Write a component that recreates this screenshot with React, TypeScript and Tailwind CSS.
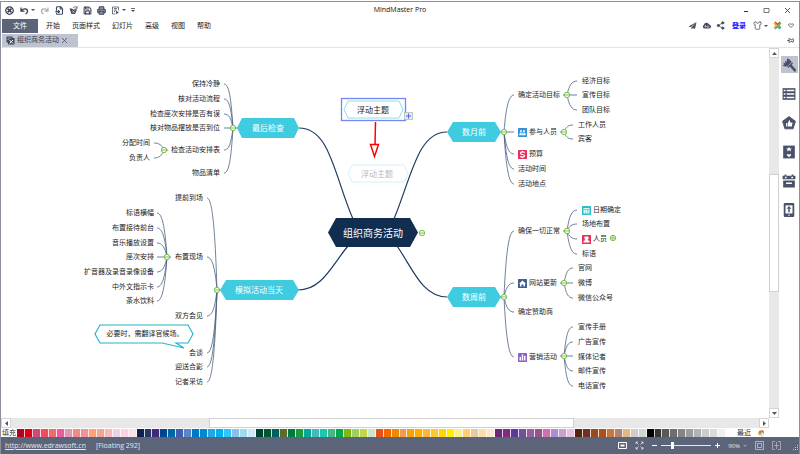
import React, { useState } from "react";
import { FileInput, Pin, Printer, Save, Share2, Shirt } from "lucide-react";

type Side = "left" | "right";
type IconKind = "people" | "money" | "date" | "person" | "home" | "chart";

type Topic = {
  label: string;
  x: number;
  y: number;
  side: Side;
  icon?: IconKind;
};

type Branch = {
  hub: [number, number];
  stem: number;
  end: number;
  side: Side;
  x: number;
  items: { label: string; y: number; icon?: IconKind }[];
};

const MENUS = ["开始", "页面样式", "幻灯片", "高级", "视图", "帮助"];

const BRANCHES: Branch[] = [
  {
    hub: [233, 128], stem: 238, end: 224, side: "left", x: 220,
    items: [
      { label: "保持冷静", y: 84 },
      { label: "核对活动流程", y: 99 },
      { label: "检查座次安排是否有误", y: 114 },
      { label: "核对物品摆放是否到位", y: 128 },
      { label: "检查活动安排表", y: 150 },
      { label: "物品清单", y: 173 },
    ],
  },
  {
    hub: [164, 150], stem: 168, end: 154, side: "left", x: 150,
    items: [
      { label: "分配时间", y: 143 },
      { label: "负责人", y: 158 },
    ],
  },
  {
    hub: [217, 290], stem: 222, end: 207, side: "left", x: 203,
    items: [
      { label: "提前到场", y: 198 },
      { label: "布置现场", y: 257 },
      { label: "双方会见", y: 316 },
      { label: "会谈", y: 353 },
      { label: "迎送合影", y: 367 },
      { label: "记者采访", y: 382 },
    ],
  },
  {
    hub: [167, 257], stem: 171, end: 157, side: "left", x: 154,
    items: [
      { label: "标语横幅", y: 213 },
      { label: "布置接待前台", y: 228 },
      { label: "音乐播放设置", y: 243 },
      { label: "座次安排", y: 257 },
      { label: "扩音器及录音录像设备", y: 272 },
      { label: "中外文指示卡", y: 287 },
      { label: "茶水饮料", y: 301 },
    ],
  },
  {
    hub: [504, 132], stem: 500, end: 514, side: "right", x: 518,
    items: [
      { label: "确定活动目标", y: 95 },
      { label: "参与人员", y: 132, icon: "people" },
      { label: "预算", y: 154, icon: "money" },
      { label: "活动时间", y: 169 },
      { label: "活动地点", y: 184 },
    ],
  },
  {
    hub: [567, 95], stem: 563, end: 577, side: "right", x: 582,
    items: [
      { label: "经济目标", y: 81 },
      { label: "宣传目标", y: 95 },
      { label: "团队目标", y: 110 },
    ],
  },
  {
    hub: [564, 132], stem: 560, end: 573, side: "right", x: 578,
    items: [
      { label: "工作人员", y: 125 },
      { label: "宾客", y: 139 },
    ],
  },
  {
    hub: [504, 297], stem: 500, end: 514, side: "right", x: 518,
    items: [
      { label: "确保一切正常", y: 231 },
      { label: "网站更新", y: 283, icon: "home" },
      { label: "确定赞助商", y: 312 },
      { label: "营销活动", y: 357, icon: "chart" },
    ],
  },
  {
    hub: [567, 231], stem: 563, end: 577, side: "right", x: 582,
    items: [
      { label: "日期确定", y: 210, icon: "date" },
      { label: "场地布置", y: 224 },
      { label: "人员", y: 239, icon: "person" },
      { label: "标语", y: 254 },
    ],
  },
  {
    hub: [564, 283], stem: 560, end: 573, side: "right", x: 578,
    items: [
      { label: "官网", y: 268 },
      { label: "微博", y: 283 },
      { label: "微信公众号", y: 298 },
    ],
  },
  {
    hub: [564, 356], stem: 560, end: 573, side: "right", x: 578,
    items: [
      { label: "宣传手册", y: 327 },
      { label: "广告宣传", y: 342 },
      { label: "媒体记者", y: 357 },
      { label: "邮件宣传", y: 371 },
      { label: "电话宣传", y: 386 },
    ],
  },
];

const SWATCHES = [
  // reds and pinks
  "#b8001a", "#e00016", "#cb4c78", "#ee4c60", "#f0696e", "#ea5c9c", "#e395b6", "#f28a88", "#f2919a", "#ffa07a", "#f0a78f", "#f6b9b9", "#ead3ea", "#fdd3e4", "#fde0e6",
  // blues
  "#0f1f4f", "#23376b", "#3f2a75", "#00468b", "#0066a8", "#3f5fae", "#5a86c8", "#0078c8", "#0088d0", "#27a7e0", "#00b0f0", "#2ec6fb", "#8bc0e8", "#9fdaf0", "#cdeaf5",
  // greens
  "#004030", "#005a2b", "#006060", "#5a6b2b", "#007a3f", "#1f9a3f", "#00ab9c", "#48b8b8", "#18c8b0", "#48b880", "#00a850", "#80b810", "#a0d060", "#c0d848", "#cde6c8",
  // oranges and yellows
  "#e8501e", "#f06a00", "#f08a00", "#f29a50", "#f5a400", "#ffae00", "#ffb830", "#ffc830", "#ffd800", "#fff000", "#fff080", "#ffd070", "#e8cc98", "#ffdcaa", "#ffe6cc",
  // purples
  "#6a2878", "#842a80", "#5e3a98", "#74509c", "#9560a0", "#9c5088", "#d070b0", "#a890d0", "#c4a4cc", "#ecc0dc",
  // browns
  "#54240f", "#733020", "#964a20", "#b05018", "#c47a3c", "#b4826a", "#e0b880", "#d4cccc", "#ccd8cc",
  // greys
  "#000000", "#3a3535", "#585858", "#6e6e6e", "#858585", "#9c9c9c", "#b0b4b4", "#c8cccc", "#dadada", "#f0f0f0",
];

function curve([hx, hy]: [number, number], end: number, y: number) {
  if (Math.abs(y - hy) < 2) return `M${hx} ${hy}H${end}`;
  const dir = end > hx ? 1 : -1;
  return `M${hx} ${hy}C${hx + 2 * dir} ${hy + (y - hy) * 0.7} ${end - 5 * dir} ${y} ${end} ${y}`;
}

function Caret() {
  return (
    <svg className="h-1 w-1" viewBox="0 0 4 4">
      <path d="M0 1h4L2 3z" fill="#444b5e" />
    </svg>
  );
}

function TopicIcon({ kind }: { kind: IconKind }) {
  return (
    <svg className="h-[9px] w-[9px] shrink-0" viewBox="0 0 18 18">
      {kind === "people" && (
        <>
          <rect width="18" height="18" rx="1" fill="#2f94dc" />
          <circle cx="6" cy="6" r="2" fill="#fff" />
          <circle cx="12" cy="6" r="2" fill="#fff" />
          <path d="M3 14v-3l2-2h2v5zM8.500 14V9H10v5zM11 14V9h2l2 2v3z" fill="#fff" />
          <path d="M3 12.500h12v2H3z" fill="#fff" />
        </>
      )}
      {kind === "money" && (
        <>
          <rect width="18" height="18" rx="1" fill="#e8305a" />
          <path d="M13 5.500c-1-2.500-8-2.500-8 .8C5 10 13 8 13 11.700c0 3.300-7 3.300-8 .3" fill="none" stroke="#fff" strokeWidth="2.500" />
          <path d="M9 1.500v2.500M9 14v2.500" stroke="#fff" strokeWidth="1.500" />
        </>
      )}
      {kind === "date" && (
        <>
          <rect width="18" height="18" rx="1" fill="#2cbccb" />
          <path d="M3 4h12v11H3z" fill="#e8fbfd" />
          <path d="M3 7h12M6 9.500h2M10 9.500h3M6 12.500h2M10 12.500h3M6 2v3M12 2v3" stroke="#2cbccb" strokeWidth="1.300" />
        </>
      )}
      {kind === "person" && (
        <>
          <rect width="18" height="18" rx="1" fill="#e8305a" />
          <path d="M5 3h8v5l-2 2 4 2v3H3v-3l4-2-2-2z" fill="#fff" />
        </>
      )}
      {kind === "home" && (
        <>
          <rect width="18" height="18" rx="1" fill="#3e5f92" />
          <path d="M2 9.500 9 3l7 6.500h-2V15h-3v-4H7v4H4V9.500z" fill="#fff" />
        </>
      )}
      {kind === "chart" && (
        <>
          <rect width="18" height="18" rx="1" fill="#8a62c8" />
          <path d="M3 15V8h3v7zM7.500 15V3h3v12zM12 15V6h3v9z" fill="#fff" />
        </>
      )}
    </svg>
  );
}

function TopicLabel({ label, x, y, side, icon }: Topic) {
  return (
    <div
      className={`absolute flex h-[10px] items-center gap-[2px] whitespace-nowrap text-[7px] leading-[10px] text-[#1c1c1c] ${side === "left" ? "-translate-x-full" : ""}`}
      style={{ left: x, top: y - 5 }}
    >
      {icon && <TopicIcon kind={icon} />}
      {label}
    </div>
  );
}

function Toggle({ x, y, plus }: { x: number; y: number; plus?: boolean }) {
  return (
    <g stroke="#7cc04a" fill="#f4fbee">
      <circle cx={x} cy={y} r="2.700" />
      <path d={`M${x - 2} ${y}h4${plus ? `M${x} ${y - 2}v4` : ""}`} strokeWidth="0.900" />
    </g>
  );
}

function Hexagon({ x, y, w, h, inset, fill, stroke = "none" }: { x: number; y: number; w: number; h: number; inset: number; fill: string; stroke?: string }) {
  const mid = y + h / 2;
  return (
    <path
      d={`M${x} ${mid}L${x + inset} ${y}H${x + w - inset}L${x + w} ${mid}L${x + w - inset} ${y + h}H${x + inset}Z`}
      fill={fill}
      stroke={stroke}
    />
  );
}

function NodeText({ x, y, className, children }: { x: number; y: number; className: string; children: React.ReactNode }) {
  return (
    <div className={`absolute -translate-x-1/2 -translate-y-1/2 whitespace-nowrap ${className}`} style={{ left: x, top: y }}>
      {children}
    </div>
  );
}

function MindMap() {
  return (
    <main className="relative min-h-0 min-w-0 overflow-hidden bg-white">
      {/* scrolled surface: topics live in drawing coordinates */}
      <div className="absolute -left-px -top-12 h-[420px] w-[770px]">
        <svg className="absolute inset-0 h-full w-full" viewBox="0 0 770 420" fill="none">
          <g stroke="#1f3a5f" strokeWidth="1.200">
            <path d="M299 128C330 128 334 175 353 219" />
            <path d="M447 132C418 132 412 175 394 219" />
            <path d="M298 290C322 290 332 265 348 246" />
            <path d="M397 246C412 267 422 297 447 297" />
          </g>
          <g stroke="#4a6282" strokeWidth="0.800">
            {BRANCHES.map((b) => (
              <g key={b.hub.join()}>
                <path d={`M${b.stem} ${b.hub[1]}H${b.hub[0]}`} />
                {b.items.map((t) => (
                  <path key={t.label} d={curve(b.hub, b.end, t.y)} />
                ))}
              </g>
            ))}
          </g>

          <Hexagon x={237} y={118} w={62} h={20} inset={5} fill="#3fcbe0" />
          <Hexagon x={220} y={280} w={79} h={20} inset={6} fill="#3fcbe0" />
          <Hexagon x={447} y={122} w={54} h={20} inset={6} fill="#3fcbe0" />
          <Hexagon x={447} y={287} w={54} h={20} inset={6} fill="#3fcbe0" />
          <Hexagon x={328} y={218} w={90} h={29} inset={8} fill="#112d50" />

          {BRANCHES.map((b) => (
            <Toggle key={b.hub.join()} x={b.hub[0]} y={b.hub[1]} />
          ))}
          <Toggle x={422} y={233} />
          <Toggle x={613} y={238} plus />

          {/* dragged floating topic and its drop preview */}
          <rect x="341.500" y="98.500" width="64" height="22" fill="#fff" stroke="#7487ee" strokeWidth="1.300" />
          <Hexagon x={344} y={101} w={59} h={17} inset={4} fill="#fff" stroke="#8fdeea" />
          <Hexagon x={348} y={165} w={60} h={17} inset={4} fill="none" stroke="#d2f3f7" />
          <rect x="404.500" y="112.500" width="8" height="7" fill="#e2eaf0" stroke="#a9bba9" strokeWidth="0.700" />
          <path d="M406 116h5M408.500 113.500v5" stroke="#5468e8" />
          <path d="M375.500 122 375 145" stroke="#f00" strokeWidth="1.500" />
          <path d="M370.500 144.500h8l-4 12z" fill="#fff" stroke="#f00" strokeWidth="1.500" />

          <path d="M100 325h88l5 9-5 9h-12l8 5-22-5H100l-5-9z" fill="#fff" stroke="#27b6c8" strokeWidth="1.200" />
        </svg>

        {BRANCHES.map((b) =>
          b.items.map((t) => <TopicLabel key={`${b.hub}${t.label}`} {...t} x={b.x} side={b.side} />)
        )}

        <NodeText x={268} y={128} className="text-[8px] leading-3 text-white">最后检查</NodeText>
        <NodeText x={259} y={290} className="text-[8px] leading-3 text-white">模拟活动当天</NodeText>
        <NodeText x={474} y={132} className="text-[8px] leading-3 text-white">数月前</NodeText>
        <NodeText x={474} y={297} className="text-[8px] leading-3 text-white">数周前</NodeText>
        <NodeText x={373} y={233} className="text-[10px] leading-4 text-white">组织商务活动</NodeText>
        <NodeText x={373} y={110} className="text-[8px] leading-3 text-[#222]">浮动主题</NodeText>
        <NodeText x={377} y={174} className="text-[8px] leading-3 text-[#b9b9b9]">浮动主题</NodeText>
        <NodeText x={145} y={334} className="text-[7px] leading-[10px] text-[#1c1c1c]">必要时，需翻译官候场。</NodeText>
      </div>
    </main>
  );
}

function TitleBar() {
  return (
    <header className="grid h-4 grid-cols-3 items-center px-1 text-[#444b5e]">
      <div className="flex items-center gap-[5px]">
        <svg className="h-[9px] w-[9px]" viewBox="0 0 18 18">
          <circle cx="9" cy="9" r="7.500" fill="#fff" stroke="#343a4c" strokeWidth="2.500" />
          <path d="m5 5 8 8M13 5l-8 8" stroke="#343a4c" strokeWidth="3.500" />
        </svg>
        <button aria-label="Undo" className="flex items-center gap-[2px] pl-px">
          <svg className="h-[9px] w-[9px]" viewBox="0 0 18 18">
            <path d="M2 3v7h7M3 9c3-4 12-5 12 2 0 3-2 4-4 5" fill="none" stroke="#343a4c" strokeWidth="2.500" />
          </svg>
          <Caret />
        </button>
        <button aria-label="Redo">
          <svg className="h-[9px] w-[9px]" viewBox="0 0 18 18">
            <path d="M16 3v7H9M15 9C12 5 3 4 3 11c0 3 2 4 4 5" fill="none" stroke="#a9adb8" strokeWidth="2.500" />
          </svg>
        </button>
        <button aria-label="Import" className="pl-[1px]"><FileInput className="h-[9px] w-[9px]" strokeWidth={3} /></button>
        <button aria-label="Open">
          <svg className="h-[9px] w-[9px]" viewBox="0 0 18 18">
            <path d="M1 5h5l2 2h8l-4 9H5z" fill="#444b5e" />
            <path d="M8 4c2-3 5-3 7-1l1-2v5h-5" fill="none" stroke="#444b5e" strokeWidth="1.500" />
            <path d="m6 9 5 4M11 9l-4 5" stroke="#fff" />
          </svg>
        </button>
        <button aria-label="Save"><Save className="h-[9px] w-[9px]" strokeWidth={3} /></button>
        <button aria-label="Print"><Printer className="h-[9px] w-[9px] fill-[#8b90a0]" strokeWidth={3} /></button>
        <button aria-label="Options" className="flex items-center gap-[2px]">
          <svg className="h-[9px] w-[9px]" viewBox="0 0 18 18">
            <path d="M15 9V2H3v14h6M6 5h6M6 8h5M6 11h2" fill="none" stroke="#444b5e" strokeWidth="1.500" />
            <path d="m9 8 7 6-3 .5L11 17z" fill="#444b5e" />
          </svg>
          <Caret />
        </button>
        <button aria-label="Customize toolbar">
          <svg className="h-[5px] w-1" viewBox="0 0 4 5">
            <path d="M0 .5h4" stroke="#444b5e" strokeWidth="0.800" />
            <path d="M0 2h4L2 4z" fill="#444b5e" />
          </svg>
        </button>
      </div>
      <h1 className="text-center text-[7px] leading-[10px] text-[#111]">MindMaster Pro</h1>
      <div className="flex items-center justify-end gap-[14px] pr-[4px]">
        <button aria-label="Minimize">
          <svg className="h-[7px] w-[7px]" viewBox="0 0 7 7"><path d="M2 4.500h4" stroke="#333" /></svg>
        </button>
        <button aria-label="Maximize">
          <svg className="h-[7px] w-[7px]" viewBox="0 0 7 7"><path d="M1 1.500h5v4H1z" fill="none" stroke="#555" strokeWidth="0.800" /></svg>
        </button>
        <button aria-label="Close">
          <svg className="h-[7px] w-[7px]" viewBox="0 0 7 7"><path d="m1 1 5 5M6 1 1 6" stroke="#333" strokeWidth="0.800" /></svg>
        </button>
      </div>
    </header>
  );
}

function MenuBar() {
  return (
    <nav className="flex h-[15px] items-center justify-between px-px text-[7px] leading-[10px] text-[#222]">
      <div className="flex items-center gap-3">
        <button className="mr-[-4px] h-[14px] w-9 bg-[#5c6479] text-white">文件</button>
        {MENUS.map((m) => (
          <button key={m}>{m}</button>
        ))}
      </div>
      <div className="flex items-center gap-[5px] pr-[4px] text-[#444b5e]">
        <button aria-label="Send">
          <svg className="h-[9px] w-[9px]" viewBox="0 0 18 18">
            <path d="M17 2 1 11l5 1zM17 2 7 13v4l3-3 4 2z" fill="#444b5e" />
          </svg>
        </button>
        <button aria-label="Cloud">
          <svg className="h-[9px] w-[9px]" viewBox="0 0 18 18">
            <path d="M4 15a4 4 0 0 1-.5-7A5.500 5.500 0 0 1 14 7a4 4 0 0 1 0 8z" fill="#444b5e" />
            <path d="M7 9v4M5 11l2-2 2 2M12 13V9M10 11l2 2 2-2" fill="none" stroke="#fff" strokeWidth="1.200" />
          </svg>
        </button>
        <button aria-label="Share"><Share2 className="h-[9px] w-[9px] fill-[#444b5e]" strokeWidth={2} /></button>
        <a href="#login" className="px-[2px] font-bold text-[#1a1aff]">登录</a>
        <button aria-label="Theme" className="flex items-center gap-[2px]">
          <Shirt className="h-[9px] w-[9px]" strokeWidth={2} />
          <Caret />
        </button>
        <button aria-label="Apps">
          <svg className="h-[9px] w-[9px]" viewBox="0 0 18 18" fill="none" strokeWidth="3">
            <path d="m4 2 5 5 5-5" stroke="#e83828" />
            <path d="m4 16 5-5 5 5" stroke="#28a0e0" />
            <path d="m2 4 5 5-5 5" stroke="#f5a400" />
            <path d="m16 4-5 5 5 5" stroke="#58b830" />
          </svg>
        </button>
        <button aria-label="Collapse ribbon" className="pl-px">
          <svg className="h-[5px] w-[6px]" viewBox="0 0 12 10">
            <path d="M1 4c0-3 3-3 5-1 2-2 5-2 5 1L6 9z" fill="none" stroke="#444b5e" strokeWidth="1.500" />
          </svg>
        </button>
      </div>
    </nav>
  );
}

function TabStrip() {
  return (
    <div className="flex h-[15px] items-center justify-between border-b border-[#e4e4e4] px-px">
      <div className="flex h-[13px] w-[76px] items-center gap-[2px] bg-[#bfc3d0] px-1 text-[7px] leading-[10px] text-[#333a4c]">
        <svg className="h-[9px] w-[9px] shrink-0" viewBox="0 0 18 18">
          <path d="M1 1h12v3h4v13H4v-4H1z" fill="#3c4459" />
          <path d="M3 4h8M3 7h3" stroke="#fff" />
          <path d="m7 8 7 7M14 8l-7 7" stroke="#fff" strokeWidth="2" />
        </svg>
        <span className="whitespace-nowrap">组织商务活动</span>
        <button aria-label="Close tab" className="ml-px">
          <svg className="h-[5px] w-[5px]" viewBox="0 0 5 5"><path d="m0 0 5 5M5 0 0 5" stroke="#444b5e" strokeWidth="0.800" /></svg>
        </button>
      </div>
      <button aria-label="Pin panel" className="pr-[4px]">
        <Pin className="h-[7px] w-[7px] rotate-90 text-[#444b5e]" strokeWidth={3} />
      </button>
    </div>
  );
}

function ScrollArrow({ d, label }: { d: string; label: string }) {
  return (
    <button aria-label={label} className="flex h-[10px] w-[10px] shrink-0 items-center justify-center border border-[#d4d4d4] bg-white">
      <svg className="h-[5px] w-[5px]" viewBox="0 0 5 5"><path d={d} fill="#555" /></svg>
    </button>
  );
}

const TOOLS = [
  {
    label: "Style",
    art: (
      <>
        <path d="M9 1c3 0 5 2 6 4l4 4-8 8-3-3c-3 1-6 0-7-2l3-1-2-3 4 1-1-4 3 1z" fill="#4a5269" />
        <path d="m15 13 7 8" stroke="#4a5269" strokeWidth="4.500" strokeLinecap="round" />
        <path d="m17 7-8 8" stroke="#bfc3d0" strokeWidth="1.200" />
      </>
    ),
  },
  {
    label: "Outline",
    art: (
      <>
        <path d="M1 2h22v20H1z" fill="#4a5269" />
        <path d="M3 6h3M8 6h13M3 12h3M8 12h13M3 18h3M8 18h13" stroke="#fff" strokeWidth="2.500" />
      </>
    ),
  },
  {
    label: "Clipart",
    art: (
      <>
        <path d="M12 1 23 9l-4 13H5L1 9z" fill="#4a5269" stroke="#4a5269" strokeWidth="1.500" strokeLinejoin="round" />
        <path d="M7 18v-6h2v6zM10 12l3-6 1 5h4l-1 7h-7z" fill="#fff" />
      </>
    ),
  },
  {
    label: "Marks",
    art: (
      <>
        <path d="M2 1h20v22H2z" fill="#4a5269" />
        <path d="m12 3 1.500 3H17l-2.500 2 1 3-3.500-2-3.500 2 1-3L7 6h3.500z" fill="#fff" />
        <path d="m12 21-4-4 2-2 2 1.500 2-1.500 2 2z" fill="#fff" />
      </>
    ),
  },
  {
    label: "Tasks",
    art: (
      <>
        <path d="M1 3h22v6H1zM2 11h20v12H2z" fill="#4a5269" />
        <path d="M6 1v5M18 1v5" stroke="#4a5269" strokeWidth="3" />
        <path d="M5 6h3M16 6h3M7 16h10" stroke="#fff" strokeWidth="2.500" />
      </>
    ),
  },
  {
    label: "Device",
    art: (
      <>
        <rect x="3" y="0" width="18" height="24" rx="2" fill="#4a5269" />
        <path d="M6 4h12v14H6z" fill="#fff" />
        <path d="M12 16V9" stroke="#4a5269" strokeWidth="2.500" />
        <path d="m8 10 4-5 4 5z" fill="#4a5269" />
        <circle cx="12" cy="21" r="1.200" fill="#fff" />
      </>
    ),
  },
];

function SideTools() {
  const [active, setActive] = useState("Style");
  return (
    <aside className="flex w-5 flex-col items-center gap-[12px] bg-white pt-2">
      {TOOLS.map((t) => (
        <button
          key={t.label}
          aria-label={t.label}
          onClick={() => setActive(t.label)}
          className={`flex h-[17px] w-[17px] items-center justify-center ${active === t.label ? "bg-[#bfc3d0]" : ""}`}
        >
          <svg className="h-[14px] w-[14px]" viewBox="0 0 24 24" fill="none">{t.art}</svg>
        </button>
      ))}
    </aside>
  );
}

function ColorBar() {
  return (
    <div className="flex h-[9px] items-center bg-white text-[7px] leading-[9px] text-[#333]">
      <span className="w-4 shrink-0 pl-px">填充</span>
      <div className="flex h-2 min-w-0 flex-1">
        {SWATCHES.map((c, i) => (
          <button key={i} aria-label={c} className="h-full min-w-0 flex-1 border-r border-white/80" style={{ backgroundColor: c }} />
        ))}
      </div>
      <div className="flex w-[73px] shrink-0 items-center gap-[6px] pl-[11px]">
        <span>最近</span>
        <button aria-label="More colors">
          <svg className="h-2 w-2" viewBox="0 0 16 16">
            <path d="M2 9c0-5 5-8 9-7 4 2 4 8 1 9-2 0-3-1-4 1s-6 1-6-3z" fill="#e9a94a" />
            <circle cx="6" cy="6" r="1.800" fill="#3a80d8" />
            <circle cx="11" cy="5" r="1.800" fill="#e04838" />
            <path d="M9 7v8h3V7z" fill="#fff" stroke="#888" strokeWidth="0.500" />
          </svg>
        </button>
      </div>
    </div>
  );
}

function StatusBar() {
  const [zoom, setZoom] = useState(90);
  return (
    <footer className="flex h-[17px] items-center justify-between bg-[#5c6479] pl-1 text-[7px] leading-[10px] text-[#e6e8ee]">
      <div className="flex items-center gap-[10px]">
        <a href="#edrawsoft" className="underline">http://www.edrawsoft.cn</a>
        <span>[Floating 292]</span>
      </div>
      <div className="flex items-center gap-2">
        <button aria-label="Fit page">
          <svg className="h-[9px] w-[9px]" viewBox="0 0 9 9"><path d="M.5 1.500h8v6h-8z" fill="none" stroke="#fff" /><path d="M2.500 3.500h4v2h-4z" fill="#fff" /></svg>
        </button>
        <button aria-label="Full screen">
          <svg className="h-[9px] w-[9px]" viewBox="0 0 18 18" fill="none" stroke="#e6e8ee" strokeWidth="1.500">
            <path d="M2 6V2h4M12 2h4v4M16 12v4h-4M6 16H2v-4M2 2l5 5M16 2l-5 5M16 16l-5-5M2 16l5-5" />
          </svg>
        </button>
        <div className="flex items-center gap-[4px]">
          <button aria-label="Zoom out"><svg className="h-[5px] w-[5px]" viewBox="0 0 5 5"><path d="M0 2.500h5" stroke="#fff" /></svg></button>
          <input
            type="range"
            aria-label="Zoom"
            min={10}
            max={400}
            value={zoom}
            onChange={(e) => setZoom(Number(e.target.value))}
            className="h-2 w-[50px] appearance-none bg-transparent [&::-webkit-slider-runnable-track]:h-px [&::-webkit-slider-runnable-track]:bg-[#e6e8ee] [&::-webkit-slider-thumb]:-mt-[3px] [&::-webkit-slider-thumb]:h-[7px] [&::-webkit-slider-thumb]:w-[3px] [&::-webkit-slider-thumb]:appearance-none [&::-webkit-slider-thumb]:bg-white"
          />
          <button aria-label="Zoom in"><svg className="h-[5px] w-[5px]" viewBox="0 0 5 5"><path d="M0 2.500h5M2.500 0v5" stroke="#fff" /></svg></button>
        </div>
        <button className="flex items-center gap-[3px] text-[6px]">
          {zoom}%
          <svg className="h-1 w-1" viewBox="0 0 4 4"><path d="M0 1h4L2 3z" fill="#8f96a8" /></svg>
        </button>
        <button aria-label="Fit selection">
          <svg className="h-[9px] w-[9px]" viewBox="0 0 9 9" fill="none" stroke="#c3c7d2"><path d="M.5.5h8v8h-8z" strokeWidth="0.800" /><path d="M2.500 2.500h4v4h-4z" strokeWidth="0.800" /></svg>
        </button>
        <button aria-label="Split view">
          <svg className="h-[9px] w-[9px]" viewBox="0 0 9 9" fill="none" stroke="#aeb3c2" strokeWidth="0.800"><path d="M3 .5H.5v8H3M6 .5h2.500v8H6M2 4.500h5M4.500 1v7" /></svg>
        </button>
        <svg className="ml-[3px] h-[7px] w-[7px] self-end" viewBox="0 0 7 7" fill="#c3c7d2">
          <path d="M5 1h1v1H5zM3 3h1v1H3zM5 3h1v1H5zM1 5h1v1H1zM3 5h1v1H3zM5 5h1v1H5z" />
        </svg>
      </div>
    </footer>
  );
}

export default function App() {
  return (
    <div className="h-screen bg-white pt-px font-['Open_Sans','Noto_Sans_CJK_SC',sans-serif]">
      <div className="flex h-full flex-col border-x border-t border-[#8b8f9b]">
        <TitleBar />
        <MenuBar />
        <TabStrip />
        <div className="flex min-h-0 flex-1">
          <div className="grid min-w-0 flex-1 grid-cols-[minmax(0,1fr)_10px] grid-rows-[minmax(0,1fr)_10px]">
            <MindMap />
            <div className="flex min-h-0 flex-col bg-[#e8e8e8]">
              <ScrollArrow label="Scroll up" d="M0 4h5L2.500 1z" />
              <div className="flex-1" />
              <div className="flex-1 border border-[#d0d0d0] bg-white" />
              <div className="flex-1" />
              <ScrollArrow label="Scroll down" d="M0 1h5L2.500 4z" />
            </div>
            <div className="flex min-w-0 bg-[#e8e8e8]">
              <ScrollArrow label="Scroll left" d="M4 0v5L1 2.500z" />
              <div className="grow-[199]" />
              <div className="grow-[364] border border-[#d0d0d0] bg-white" />
              <div className="grow-[186]" />
              <ScrollArrow label="Scroll right" d="M1 0v5l3-2.500z" />
            </div>
            <div className="bg-white" />
          </div>
          <SideTools />
        </div>
        <ColorBar />
        <StatusBar />
      </div>
    </div>
  );
}
